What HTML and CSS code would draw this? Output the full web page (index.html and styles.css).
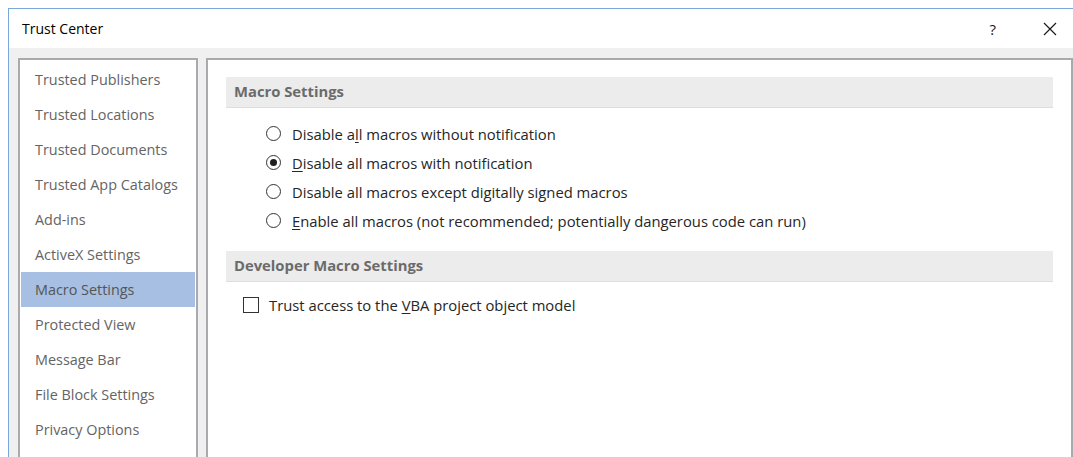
FILE: index.html
```html
<!DOCTYPE html>
<html lang="en">
<head>
<meta charset="utf-8">
<title>Trust Center</title>
<link rel="stylesheet" href="styles.css">
</head>
<body>
<div class="window">
  <div class="titlebar">
    <span class="title">Trust Center</span>
    <div class="caption-buttons">
      <span class="help">?</span>
      <svg class="close" width="14" height="14" viewBox="0 0 14 14" aria-hidden="true">
        <path d="M1 1 L13 13 M13 1 L1 13" stroke="#1a1a1a" stroke-width="1.2" fill="none"/>
      </svg>
    </div>
  </div>
  <div class="body">
    <ul class="nav">
      <li class="nav-item">Trusted Publishers</li>
      <li class="nav-item">Trusted Locations</li>
      <li class="nav-item">Trusted Documents</li>
      <li class="nav-item">Trusted App Catalogs</li>
      <li class="nav-item">Add-ins</li>
      <li class="nav-item">ActiveX Settings</li>
      <li class="nav-item selected">Macro Settings</li>
      <li class="nav-item">Protected View</li>
      <li class="nav-item">Message Bar</li>
      <li class="nav-item">File Block Settings</li>
      <li class="nav-item">Privacy Options</li>
    </ul>
    <div class="content">
      <div class="section-head">Macro Settings</div>
      <div class="options">
        <label class="option"><span class="radio"></span><span>Disable a<u>l</u>l macros without notification</span></label>
        <label class="option"><span class="radio checked"></span><span><u>D</u>isable all macros with notification</span></label>
        <label class="option"><span class="radio"></span><span>Disable all macros except di<u>g</u>itally signed macros</span></label>
        <label class="option"><span class="radio"></span><span><u>E</u>nable all macros (not recommended; potentially dangerous code can run)</span></label>
      </div>
      <div class="section-head dev">Developer Macro Settings</div>
      <label class="check-row"><span class="checkbox"></span><span>Trust access to the <u>V</u>BA project object model</span></label>
    </div>
  </div>
</div>
</body>
</html>
```

FILE: styles.css
```css
* {
  box-sizing: border-box;
}

html, body {
  height: 100%;
}

body {
  margin: 0;
  background: #ffffff;
  font-family: "Open Sans", "Noto Sans", sans-serif;
  font-size: 14px;
  color: #262626;
  overflow: hidden;
}

.window {
  margin: 8px 0 0 8px;
  height: calc(100% - 8px);
  border-top: 1px solid #7aa7d9;
  border-left: 1px solid #7aa7d9;
  display: flex;
  flex-direction: column;
}

.titlebar {
  height: 39px;
  flex: none;
  display: flex;
  align-items: center;
  justify-content: space-between;
  padding-left: 13px;
  background: #ffffff;
}

.title {
  font-size: 14px;
  color: #000;
}

.caption-buttons {
  display: flex;
  align-items: center;
  gap: 47px;
  padding-right: 16px;
}

.help {
  font-size: 15px;
  color: #1a1a1a;
}

.close {
  display: block;
}

.body {
  flex: 1;
  background: #f0f0f0;
  display: flex;
  gap: 8px;
  padding: 10px 0 0 9px;
  min-height: 0;
}

.nav {
  list-style: none;
  margin: 0;
  padding: 2px 1px 0 1px;
  width: 180px;
  flex: none;
  background: #ffffff;
  border: 2px solid #a9a9ae;
  border-bottom: none;
  font-size: 14.4px;
}

.nav-item {
  height: 35px;
  line-height: 35px;
  padding-left: 14px;
  color: #646464;
  white-space: nowrap;
}

.nav-item.selected {
  background: #a6bfe2;
  color: #555;
}

.content {
  flex: 1;
  background: #ffffff;
  border: 2px solid #a9a9ae;
  border-bottom: none;
  padding: 17px 18px 0 18px;
  font-size: 14.8px;
}

.section-head {
  height: 31px;
  line-height: 29px;
  padding-left: 8px;
  background: #ececec;
  border-bottom: 1px solid #dedede;
  font-weight: 700;
  color: #6b6b6b;
}

.options {
  padding: 11px 0 0 40px;
  margin-bottom: 16px;
}

.option {
  display: flex;
  align-items: center;
  height: 29px;
  gap: 11px;
}

.radio {
  width: 15px;
  height: 15px;
  border: 1px solid #333;
  border-radius: 50%;
  flex: none;
  display: flex;
  align-items: center;
  justify-content: center;
}

.radio.checked::after {
  content: "";
  width: 7px;
  height: 7px;
  border-radius: 50%;
  background: #1f1f1f;
}

.check-row {
  display: flex;
  align-items: center;
  gap: 10px;
  margin: 8px 0 0 17px;
  height: 29px;
}

.checkbox {
  width: 16px;
  height: 16px;
  border: 1px solid #333;
  flex: none;
}

u {
  text-decoration-thickness: 1px;
  text-underline-offset: 2px;
}
```
